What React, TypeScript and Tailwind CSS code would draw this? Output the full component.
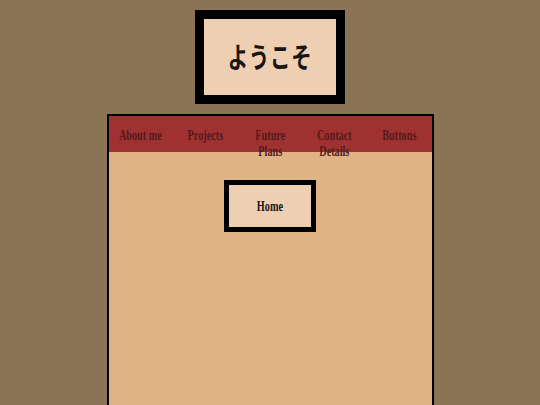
const NAV = ['About me', 'Projects', 'Future Plans', 'Contact Details', 'Buttons'];

// text in the reference is horizontally squeezed, so every label gets a scale-x
const SQUEEZE = 'inline-block origin-center scale-x-[0.73]';

export default function App() {
  return (
    <div className="min-h-screen h-[405px] overflow-hidden bg-[#8b7355] pt-[10px] font-['Liberation_Serif',serif]">
      <div className="mx-auto w-[150px] h-[94px] border-[9px] border-black bg-[#efcfb1] flex items-center justify-center">
        <span
          className={`${SQUEEZE} text-[28px] font-semibold text-[#1a1414] font-['Noto_Sans_CJK_JP','Noto_Sans_CJK_SC',sans-serif] tracking-[1px] -mt-[2px]`}
        >
          ようこそ
        </span>
      </div>

      <div className="mx-auto mt-[10px] w-[327px] h-[320px] border-2 border-black bg-[#e0b385]">
        <nav className="h-[36px] bg-[#a03131] flex">
          {NAV.map((item) => (
            <div key={item} className="flex-1 min-w-0 text-center pt-[12px]">
              <span className={`${SQUEEZE} align-top text-[14px] leading-4 font-bold text-[#521c1c]`}>{item}</span>
            </div>
          ))}
        </nav>

        <div className="flex justify-center mt-[28px]">
          <div className="w-[92px] h-[52px] border-[5px] border-black bg-[#efcfb1] flex items-center justify-center">
            <span className={`${SQUEEZE} text-[14px] font-bold text-[#1a1414]`}>Home</span>
          </div>
        </div>
      </div>
    </div>
  );
}
